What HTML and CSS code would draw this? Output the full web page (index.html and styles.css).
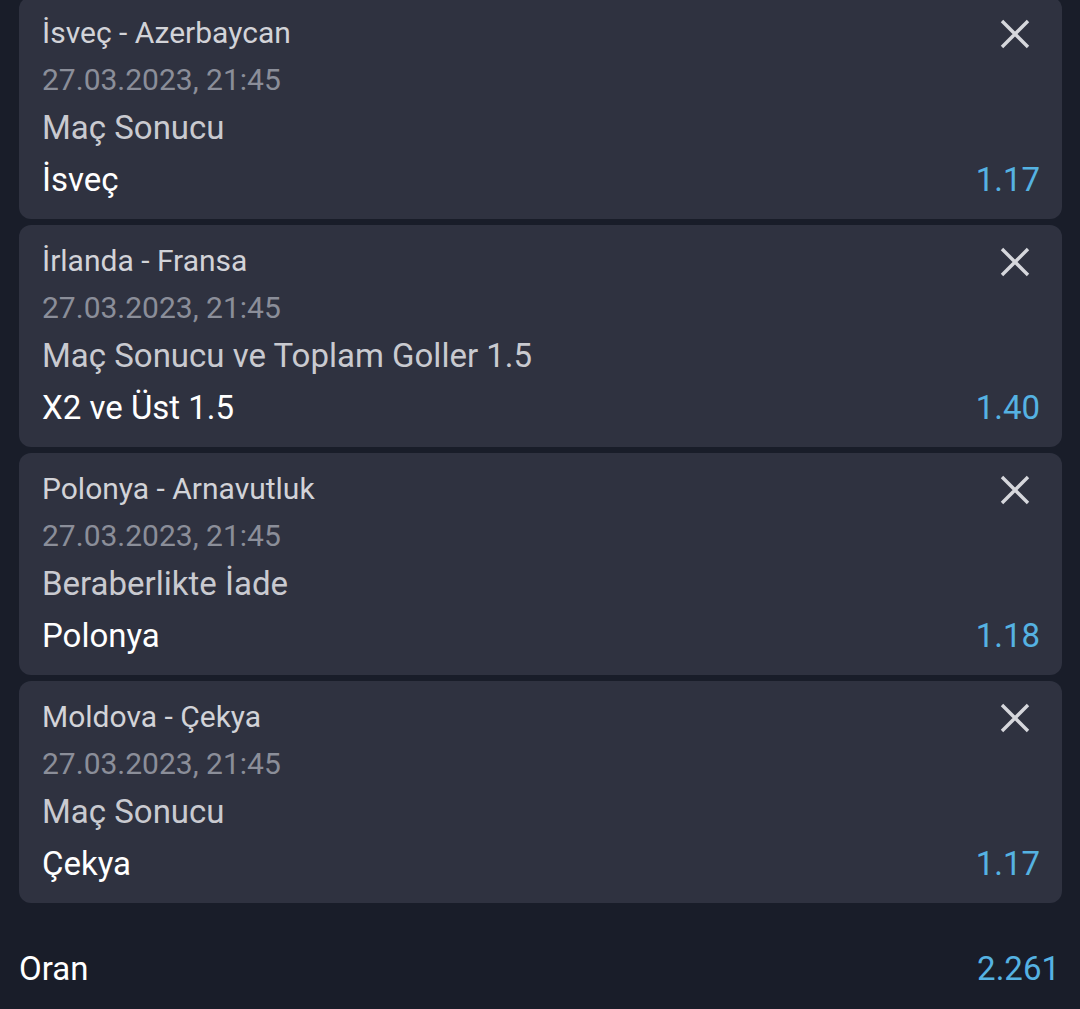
FILE: index.html
```html
<!DOCTYPE html>
<html lang="tr">
<head>
<meta charset="utf-8">
<link rel="stylesheet" href="styles.css">
</head>
<body>
<div class="slip">
  <div class="card">
    <div class="head"><span class="match">İsveç - Azerbaycan</span><span class="close"><svg viewBox="0 0 30 30" width="30" height="30"><path d="M2 2L28 28M28 2L2 28"/></svg></span></div>
    <div class="date">27.03.2023, 21:45</div>
    <div class="market">Maç Sonucu</div>
    <div class="pick"><span>İsveç</span><span class="odd">1.17</span></div>
  </div>
  <div class="card">
    <div class="head"><span class="match">İrlanda - Fransa</span><span class="close"><svg viewBox="0 0 30 30" width="30" height="30"><path d="M2 2L28 28M28 2L2 28"/></svg></span></div>
    <div class="date">27.03.2023, 21:45</div>
    <div class="market">Maç Sonucu ve Toplam Goller 1.5</div>
    <div class="pick"><span>X2 ve Üst 1.5</span><span class="odd">1.40</span></div>
  </div>
  <div class="card">
    <div class="head"><span class="match">Polonya - Arnavutluk</span><span class="close"><svg viewBox="0 0 30 30" width="30" height="30"><path d="M2 2L28 28M28 2L2 28"/></svg></span></div>
    <div class="date">27.03.2023, 21:45</div>
    <div class="market">Beraberlikte İade</div>
    <div class="pick"><span>Polonya</span><span class="odd">1.18</span></div>
  </div>
  <div class="card">
    <div class="head"><span class="match">Moldova - Çekya</span><span class="close"><svg viewBox="0 0 30 30" width="30" height="30"><path d="M2 2L28 28M28 2L2 28"/></svg></span></div>
    <div class="date">27.03.2023, 21:45</div>
    <div class="market">Maç Sonucu</div>
    <div class="pick"><span>Çekya</span><span class="odd">1.17</span></div>
  </div>
  <div class="total"><span>Oran</span><span class="odd">2.261</span></div>
</div>
</body>
</html>
```
FILE: styles.css
```css
html, body {
  margin: 0;
  padding: 0;
  background: #191d29;
  font-family: Roboto, "Noto Sans", sans-serif;
  overflow: hidden;
}
.slip {
  margin-top: -3px;
  padding: 0 18px 0 19px;
  display: flex;
  flex-direction: column;
  gap: 6px;
}
.card {
  background: #2f3240;
  border-radius: 12px;
  padding: 11px 22px 10px 23px;
  height: 201px;
}
.head {
  display: flex;
  justify-content: space-between;
  align-items: center;
  height: 48px;
}
.match {
  font-size: 30px;
  color: #d2d3d8;
}
.close {
  display: flex;
  margin: 4px 10px 0 0;
}
.close svg path {
  stroke: #d6d7dc;
  stroke-width: 3.4;
  fill: none;
}
.date {
  font-size: 30px;
  line-height: 48px;
  color: #8b8e99;
}
.market {
  font-size: 33px;
  line-height: 47px;
  color: #c9cad0;
}
.pick {
  display: flex;
  justify-content: space-between;
  font-size: 33px;
  line-height: 58px;
  color: #ffffff;
}
.odd {
  color: #55b2e2;
}
.total {
  display: flex;
  justify-content: space-between;
  align-items: center;
  margin-top: 34px;
  padding: 0 2px 0 0;
  font-size: 33px;
  height: 50px;
  color: #ffffff;
}
```
